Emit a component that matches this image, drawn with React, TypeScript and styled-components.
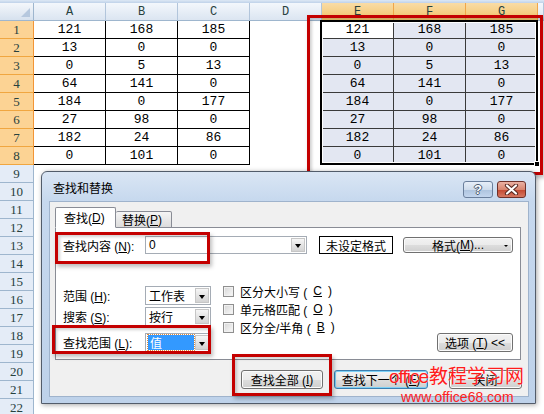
import React from 'react';
import styled, { createGlobalStyle } from 'styled-components';

const GlobalStyle = createGlobalStyle`
  html, body {
    margin: 0;
    padding: 0;
    background: #fff;
  }
  body {
    width: 544px;
    height: 414px;
    overflow: hidden;
    font-family: "Liberation Sans", "Noto Sans CJK SC", sans-serif;
  }
  * {
    box-sizing: border-box;
  }
`;

const COLS = ['A', 'B', 'C', 'D', 'E', 'F', 'G'];
const DATA = [
  [121, 168, 185],
  [13, 0, 0],
  [0, 5, 13],
  [64, 141, 0],
  [184, 0, 177],
  [27, 98, 0],
  [182, 24, 86],
  [0, 101, 0],
];
const ROWS = Array.from({ length: 22 }, (_, i) => i + 1);

type CellKind = 'plain' | 'boxed' | 'selected' | 'active';

const App = () => {
  return (
    <Page>
      <GlobalStyle />
      <Sheet>
        <TopBand />
        <Corner />
        {COLS.map((c, i) => (
          <ColHeader key={c} $on={i >= 4}>
            {c}
          </ColHeader>
        ))}
        <ColHeader />
        {ROWS.map((r) => (
          <React.Fragment key={r}>
            <RowHeader $on={r <= 8}>{r}</RowHeader>
            {COLS.map((c, ci) => {
              let kind: CellKind = 'plain';
              let value: number | null = null;
              if (r <= 8 && ci < 3) {
                kind = 'boxed';
                value = DATA[r - 1][ci];
              }
              if (r <= 8 && ci >= 4) {
                kind = r === 1 && ci === 4 ? 'active' : 'selected';
                value = DATA[r - 1][ci - 4];
              }
              return (
                <Cell key={c} $kind={kind}>
                  {value}
                  {kind === 'active' && (
                    <Selection>
                      <FillHandle />
                    </Selection>
                  )}
                </Cell>
              );
            })}
            <Cell $kind="plain" />
          </React.Fragment>
        ))}
      </Sheet>

      <Mark $x={307} $y={15} $w={236} $h={160} />

      <Dialog>
        <TitleBar>
          <Title>查找和替换</Title>
          <CaptionButtons>
            <HelpButton>?</HelpButton>
            <CloseButton>
              <svg width="15" height="11" viewBox="0 0 15 11">
                <path d="M3 1.5 L12 9.5 M12 1.5 L3 9.5" stroke="#5a2a22" strokeWidth="4.2" strokeLinecap="round" />
                <path d="M3 1.5 L12 9.5 M12 1.5 L3 9.5" stroke="#fff" strokeWidth="2.2" strokeLinecap="round" />
              </svg>
            </CloseButton>
          </CaptionButtons>
        </TitleBar>

        <Client>
          <Tabs>
            <Tab $active>
              查找(<Acc>D</Acc>)
            </Tab>
            <Tab>
              替换(<Acc>P</Acc>)
            </Tab>
          </Tabs>
          <Panel>
            <FindRow>
              <FieldLabel>
                查找内容 (<Acc>N</Acc>):
              </FieldLabel>
              <Combo $w={162}>
                <ComboText>0</ComboText>
                <DropButton />
              </Combo>
              <FormatPreview>未设定格式</FormatPreview>
              <Button $w={110} $h={16}>
                格式(<Acc>M</Acc>)...
                <Caret />
              </Button>
            </FindRow>

            <OptionsRow>
              <OptionFields>
                <FieldRow $gap={0}>
                  <FieldLabel>
                    范围 (<Acc>H</Acc>):
                  </FieldLabel>
                  <Combo $w={66}>
                    <ComboText>工作表</ComboText>
                    <DropButton />
                  </Combo>
                </FieldRow>
                <FieldRow $gap={2}>
                  <FieldLabel>
                    搜索 (<Acc>S</Acc>):
                  </FieldLabel>
                  <Combo $w={66}>
                    <ComboText>按行</ComboText>
                    <DropButton />
                  </Combo>
                </FieldRow>
                <FieldRow $gap={7}>
                  <FieldLabel>
                    查找范围 (<Acc>L</Acc>):
                  </FieldLabel>
                  <Combo $w={66}>
                    <Picked>值</Picked>
                    <DropButton />
                  </Combo>
                </FieldRow>
              </OptionFields>

              <Checks>
                <CheckRow>
                  <CheckBox />
                  区分大小写 (<Acc>C</Acc>)
                </CheckRow>
                <CheckRow>
                  <CheckBox />
                  单元格匹配 (<Acc>O</Acc>)
                </CheckRow>
                <CheckRow>
                  <CheckBox />
                  区分全/半角 (<Acc>B</Acc>)
                </CheckRow>
              </Checks>

              <OptionsButton $w={76} $h={19}>
                选项 (<Acc>T</Acc>) &lt;&lt;
              </OptionsButton>
            </OptionsRow>
          </Panel>

          <ButtonBar>
            <Button $w={82} $h={19}>
              查找全部 (<Acc>I</Acc>)
            </Button>
            <Button $w={94} $h={19} $focus>
              查找下一个 (<Acc>F</Acc>)
            </Button>
            <Button $w={73} $h={19}>
              关闭
            </Button>
          </ButtonBar>
        </Client>
      </Dialog>

      <Mark $x={55} $y={232} $w={155} $h={32} />
      <Mark $x={52} $y={325} $w={159} $h={29} />
      <Mark $x={232} $y={354} $w={100} $h={42} />

      <Watermark>
        <Latin>office</Latin>教程学习网
      </Watermark>
      <WatermarkUrl>www.office68.com</WatermarkUrl>
    </Page>
  );
};

export default App;

const Page = styled.div`
  position: relative;
  width: 544px;
  height: 414px;
  overflow: hidden;
  background: #fff;
`;

const Sheet = styled.div`
  display: grid;
  grid-template-columns: 34px repeat(7, 72px) 6px;
  grid-template-rows: 3px 18px repeat(22, 18px);
  font-family: "Liberation Mono", monospace;
`;

const TopBand = styled.div`
  grid-column: 1 / -1;
  background: linear-gradient(#dde8f5, #bfd2e9);
`;

const Corner = styled.div`
  position: relative;
  background: linear-gradient(#f4f7fb, #d6e1ee);
  border-right: 1px solid #9eb6ce;
  border-bottom: 1px solid #9eb6ce;

  &::after {
    content: '';
    position: absolute;
    right: 3px;
    bottom: 3px;
    border-left: 9px solid transparent;
    border-bottom: 9px solid #b6c8de;
  }
`;

const ColHeader = styled.div<{ $on?: boolean }>`
  display: flex;
  align-items: center;
  justify-content: center;
  font-size: 12px;
  color: #27413e;
  border-right: 1px solid ${({ $on }) => ($on ? '#f0a64a' : '#b2c5db')};
  border-bottom: 1px solid ${({ $on }) => ($on ? '#f29536' : '#9eb6ce')};
  background: ${({ $on }) =>
    $on
      ? 'linear-gradient(#f9dca6, #f3c46a)'
      : 'linear-gradient(#f3f7fc, #dbe5f1)'};
`;

const RowHeader = styled.div<{ $on?: boolean }>`
  display: flex;
  align-items: center;
  justify-content: center;
  font-family: "Liberation Serif", serif;
  font-size: 13px;
  color: #27413e;
  border-right: 1px solid ${({ $on }) => ($on ? '#f29536' : '#9eb6ce')};
  border-bottom: 1px solid ${({ $on }) => ($on ? '#f0a640' : '#9eb6ce')};
  background: ${({ $on }) => ($on ? '#fcd394' : '#e4ecf7')};
`;

const cellBorder: Record<CellKind, string> = {
  plain: 'transparent',
  boxed: '#000',
  selected: '#3a3a3a',
  active: '#3a3a3a',
};

const cellFill: Record<CellKind, string> = {
  plain: '#fff',
  boxed: '#fff',
  selected: '#e3e7f2',
  active: '#fff',
};

const Cell = styled.div<{ $kind: CellKind }>`
  position: ${({ $kind }) => ($kind === 'active' ? 'relative' : 'static')};
  display: flex;
  align-items: center;
  justify-content: center;
  font-size: 13px;
  color: #000;
  border-right: 1px solid ${({ $kind }) => cellBorder[$kind]};
  border-bottom: 1px solid ${({ $kind }) => cellBorder[$kind]};
  background: ${({ $kind }) => cellFill[$kind]};
`;

/* selection outline over E1:G8, anchored on the active cell */
const Selection = styled.div`
  position: absolute;
  left: -2px;
  top: -1px;
  width: 218px;
  height: 145px;
  border: 2px solid #000;
  box-shadow: inset 0 0 0 1px #fff;
  pointer-events: none;
`;

const FillHandle = styled.div`
  position: absolute;
  right: -4px;
  bottom: -4px;
  width: 6px;
  height: 6px;
  background: #000;
  border: 1px solid #fff;
`;

const Mark = styled.div<{ $x: number; $y: number; $w: number; $h: number }>`
  position: absolute;
  left: ${({ $x }) => $x}px;
  top: ${({ $y }) => $y}px;
  width: ${({ $w }) => $w}px;
  height: ${({ $h }) => $h}px;
  border: 3px solid #c40000;
  box-shadow: 2px 3px 4px rgba(0, 0, 0, 0.25),
    inset 2px 2px 3px rgba(0, 0, 0, 0.18);
  pointer-events: none;
`;

const Dialog = styled.div`
  position: absolute;
  left: 41px;
  top: 171px;
  width: 495px;
  height: 233px;
  display: flex;
  flex-direction: column;
  border: 1px solid #525c6a;
  border-radius: 6px 6px 0 0;
  background: linear-gradient(#dae6f4 0, #c6d8ee 29px, #bed2ea 100%);
  box-shadow: 1px 1px 5px rgba(0, 0, 0, 0.35);
`;

const TitleBar = styled.div`
  display: flex;
  justify-content: space-between;
  height: 29px;
  padding: 0 9px 0 11px;
`;

const Title = styled.div`
  padding-top: 9px;
  font-size: 12px;
  line-height: 17px;
  color: #000;
`;

const CaptionButtons = styled.div`
  display: flex;
  gap: 4px;
  margin-top: 9px;
`;

const HelpButton = styled.div`
  width: 30px;
  height: 17px;
  display: flex;
  align-items: center;
  justify-content: center;
  border: 1px solid #6a7f9c;
  border-radius: 3px;
  background: linear-gradient(#e6eef8 0%, #cfdcec 50%, #adc3de 51%, #c3d6ee 100%);
  font-family: "Liberation Sans", sans-serif;
  font-weight: bold;
  font-size: 13px;
  color: #fff;
  text-shadow: -1px 0 #4a5a70, 1px 0 #4a5a70, 0 -1px #4a5a70, 0 1px #4a5a70;
`;

const CloseButton = styled.div`
  width: 29px;
  height: 17px;
  display: flex;
  align-items: center;
  justify-content: center;
  border: 1px solid #6e3029;
  border-radius: 3px;
  background: linear-gradient(#eab1a3 0%, #d88670 50%, #c4472f 51%, #d57862 100%);
`;

const Client = styled.div`
  flex: 1;
  display: flex;
  flex-direction: column;
  margin: 0 6px 6px 7px;
  padding: 5px 0 0 5px;
  border: 1px solid #9fb3cc;
  background: #f0f0f0;
  font-size: 12px;
  color: #000;
`;

const Acc = styled.span`
  text-decoration: underline;
`;

const Tabs = styled.div`
  position: relative;
  z-index: 1;
  display: flex;
  align-items: flex-end;
  height: 21px;
  margin-bottom: -1px;
`;

const Tab = styled.div<{ $active?: boolean }>`
  display: flex;
  align-items: center;
  height: ${({ $active }) => ($active ? '21px' : '17px')};
  width: ${({ $active }) => ($active ? '61px' : '56px')};
  padding-left: ${({ $active }) => ($active ? '8px' : '6px')};
  border: 1px solid #898c95;
  border-left-width: ${({ $active }) => ($active ? '1px' : '0')};
  border-bottom-color: ${({ $active }) => ($active ? '#fff' : '#898c95')};
  border-radius: 2px 2px 0 0;
  background: ${({ $active }) =>
    $active ? '#fff' : 'linear-gradient(#f5f5f5, #dcdcdc)'};
`;

const Panel = styled.div`
  display: flex;
  flex-direction: column;
  width: 466px;
  height: 133px;
  border: 1px solid #898c95;
  background: #fff;
`;

const FindRow = styled.div`
  display: flex;
  align-items: center;
  height: 18px;
  margin-top: 8px;
  padding-left: 7px;
`;

const FieldLabel = styled.div`
  width: 82px;
  flex-shrink: 0;
  white-space: nowrap;
`;

const Combo = styled.div<{ $w: number }>`
  display: flex;
  align-items: center;
  width: ${({ $w }) => $w}px;
  height: 100%;
  padding-left: 2px;
  border: 1px solid #a5acb5;
  background: #fff;
`;

const ComboText = styled.span`
  padding-left: 1px;
`;

const Picked = styled.span`
  display: flex;
  align-items: center;
  width: 46px;
  height: 15px;
  padding-left: 2px;
  background: #3399ff;
  color: #fff;
  outline: 1px dotted #e08a3a;
`;

const DropButton = styled.div`
  position: relative;
  margin-left: auto;
  width: 14px;
  height: calc(100% - 2px);
  margin-right: 1px;
  border: 1px solid #c6c6c6;
  background: linear-gradient(#f6f6f6, #d3d3d3);

  &::after {
    content: '';
    position: absolute;
    left: 3px;
    top: 50%;
    margin-top: -1px;
    border-left: 3.5px solid transparent;
    border-right: 3.5px solid transparent;
    border-top: 4px solid #000;
  }
`;

const FormatPreview = styled.div`
  display: flex;
  align-items: center;
  justify-content: center;
  width: 74px;
  height: 18px;
  margin-left: 12px;
  border: 1px solid #000;
  background: #fff;
`;

const Button = styled.div<{ $w: number; $h: number; $focus?: boolean }>`
  position: relative;
  display: flex;
  align-items: center;
  justify-content: center;
  width: ${({ $w }) => $w}px;
  height: ${({ $h }) => $h}px;
  border: 1px solid ${({ $focus }) => ($focus ? '#3c7fb1' : '#707070')};
  border-radius: 3px;
  background: linear-gradient(#f2f2f2 0%, #ebebeb 50%, #dddddd 51%, #cfcfcf 100%);
  box-shadow: inset 0 0 0 1px ${({ $focus }) => ($focus ? '#7dd0f5' : '#fbfbfb')};
  white-space: nowrap;

  ${FindRow} & {
    margin-left: 10px;
  }
`;

const Caret = styled.span`
  position: absolute;
  right: 4px;
  top: 7px;
  border-left: 2px solid transparent;
  border-right: 2px solid transparent;
  border-top: 2px solid #000;
`;

const OptionsRow = styled.div`
  flex: 1;
  display: flex;
  margin-top: 28px;
  padding-left: 7px;
`;

const OptionFields = styled.div`
  display: flex;
  flex-direction: column;
  padding-top: 4px;
`;

const FieldRow = styled.div<{ $gap: number }>`
  display: flex;
  align-items: center;
  height: 19px;
  margin-top: ${({ $gap }) => $gap}px;
`;

const Checks = styled.div`
  display: flex;
  flex-direction: column;
  margin-left: 12px;
`;

const CheckRow = styled.div`
  display: flex;
  align-items: center;
  gap: 6px;
  height: 18px;
  white-space: nowrap;
`;

const CheckBox = styled.span`
  width: 11px;
  height: 11px;
  border: 1px solid #8f8f8f;
  background: linear-gradient(135deg, #d6d6d6, #f9f9f9);
  box-shadow: inset 0 0 0 1px #f1f1f1;
`;

const OptionsButton = styled(Button)`
  align-self: flex-end;
  margin: 0 7px 7px auto;
`;

const ButtonBar = styled.div`
  display: flex;
  justify-content: flex-end;
  gap: 11px;
  margin-top: 10px;
  padding-right: 6px;

  & > :last-child {
    margin-left: 10px;
  }
`;

const Watermark = styled.div`
  position: absolute;
  left: 389px;
  top: 364px;
  font-family: "Noto Sans CJK SC", sans-serif;
  font-size: 19px;
  line-height: 22px;
  color: #ff1c1c;
  white-space: nowrap;
  text-shadow: 0 0 1px #fff;
`;

const Latin = styled.span`
  font-family: "Liberation Sans", sans-serif;
  letter-spacing: -1px;
  margin-right: 1px;
`;

const WatermarkUrl = styled.div`
  position: absolute;
  left: 401px;
  top: 390px;
  font-family: "Liberation Sans", sans-serif;
  font-size: 14px;
  line-height: 14px;
  color: #ff2020;
  white-space: nowrap;
`;
